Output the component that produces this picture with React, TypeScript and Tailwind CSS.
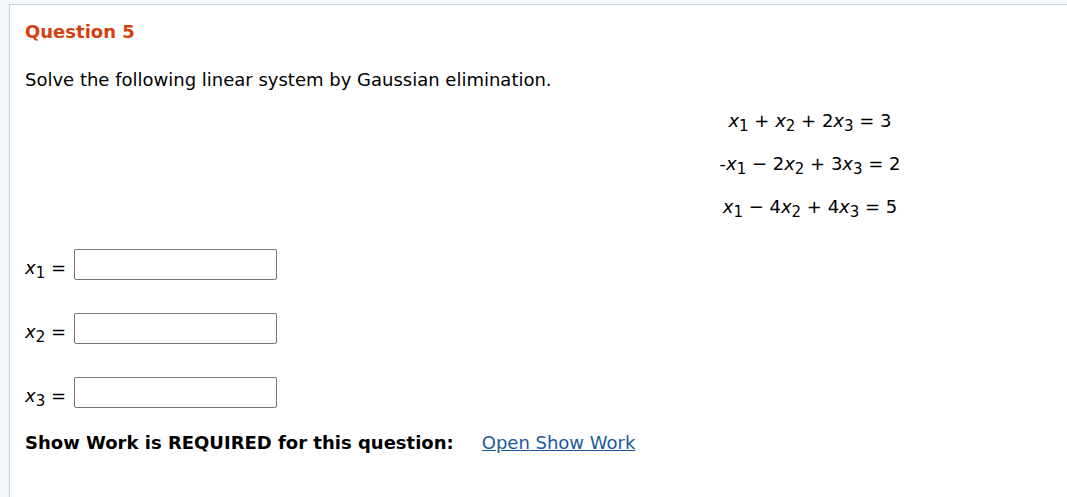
const V = ({ n }: { n: number }) => (
  <span>
    <i>x</i>
    <sub className="text-[15px] relative top-[4px] align-baseline">{n}</sub>
  </span>
);

const Equation = ({ children }: { children: React.ReactNode }) => (
  <div className="whitespace-pre text-center h-[43px] last:h-[35px] leading-[20px]">{children}</div>
);

const AnswerRow = ({ n }: { n: number }) => (
  <div className="flex items-center h-[64px]">
    <div className="w-[49px] whitespace-pre pt-[8px] leading-[20px]">
      <V n={n} /> =
    </div>
    <input
      type="text"
      className="w-[203px] h-[31px] border border-[#767676] rounded-[2px] bg-white"
    />
  </div>
);

export default function App() {
  return (
    <div
      className="w-[1067px] h-[497px] bg-[#f3f7fb] pt-[4px] pl-[9px] overflow-hidden text-[18px] text-black"
      style={{ fontFamily: "'DejaVu Sans', Verdana, sans-serif" }}
    >
      <div className="bg-white h-full border-t border-l border-[#c6cfdb] pl-[15px] pt-[16px]">
        <h2 className="text-[#d4410f] font-bold text-[18px] leading-[22px]">Question 5</h2>
        <p className="mt-[27px] leading-[20px]">
          Solve the following linear system by Gaussian elimination.
        </p>
        <div className="mt-[21px] ml-[640px] w-[290px]">
          <Equation>
            <V n={1} /> + <V n={2} /> + 2<V n={3} /> = 3
          </Equation>
          <Equation>
            -<V n={1} /> − 2<V n={2} /> + 3<V n={3} /> = 2
          </Equation>
          <Equation>
            <V n={1} /> − 4<V n={2} /> + 4<V n={3} /> = 5
          </Equation>
        </div>
        <div>
          <AnswerRow n={1} />
          <AnswerRow n={2} />
          <AnswerRow n={3} />
        </div>
        <div className="mt-[8px] flex items-center gap-[28px] leading-[22px]">
          <span className="font-bold">Show Work is REQUIRED for this question:</span>
          <a href="#" className="text-[#1b5a97] underline">
            Open Show Work
          </a>
        </div>
      </div>
    </div>
  );
}
